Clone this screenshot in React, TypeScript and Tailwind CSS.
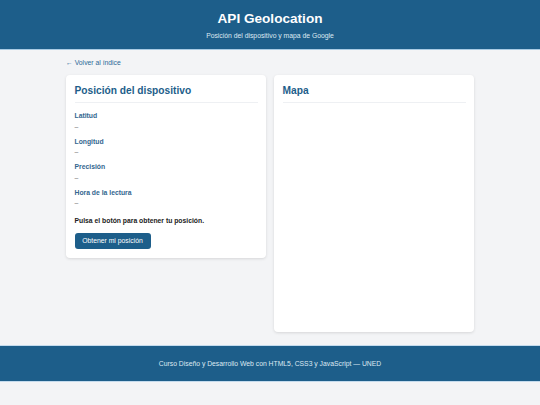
export default function App() {
  const fields = ["Latitud", "Longitud", "Precisión", "Hora de la lectura"]

  return (
    <div className="min-h-[405px] bg-[#f3f4f6] font-['Liberation_Sans',Arial,sans-serif] text-[6.8px] text-[#222]">
      <header className="h-[50px] border-b-[1.5px] border-[#a9cbe4] bg-[#1d5e8a] text-center text-white">
        <h1 className="pt-[11px] text-[13.6px] font-bold leading-[16px]">API Geolocation</h1>
        <p className="mt-[5px] text-[6.8px] leading-[8px] text-[#dde9f2]">
          Posición del dispositivo y mapa de Google
        </p>
      </header>

      <main className="mx-auto w-[408px] pt-[9px] pb-[13px]">
        <a href="#" className="block leading-[8px] text-[#2d6a96]">
          ← Volver al índice
        </a>

        <div className="mt-[8px] grid grid-cols-2 items-start gap-[8px]">
          <section className="rounded-[4px] bg-white p-[8.5px] shadow-[0_1px_3px_rgba(0,0,0,0.12)]">
            <h2 className="border-b border-[#eef0f3] pt-[1px] pb-[5px] text-[10.2px] font-bold leading-[12px] text-[#1d5e8a]">
              Posición del dispositivo
            </h2>
            <dl className="mt-[9.5px] flex flex-col gap-[7px]">
              {fields.map((f) => (
                <div key={f}>
                  <dt className="font-bold leading-[8px] text-[#33668f]">{f}</dt>
                  <dd className="mt-[2.5px] leading-[8px] text-[#777]">–</dd>
                </div>
              ))}
            </dl>
            <p className="mt-[10px] font-bold leading-[8px] text-[#222]">
              Pulsa el botón para obtener tu posición.
            </p>
            <button className="mt-[8px] h-[16px] w-[76px] rounded-[3px] bg-[#1d5e8a] text-[6.8px] leading-[16px] text-white">
              Obtener mi posición
            </button>
          </section>

          <section className="rounded-[4px] bg-white p-[8.5px] shadow-[0_1px_3px_rgba(0,0,0,0.12)]">
            <h2 className="border-b border-[#eef0f3] pt-[1px] pb-[5px] text-[10.2px] font-bold leading-[12px] text-[#1d5e8a]">
              Mapa
            </h2>
            <div className="mt-[8.5px] h-[212px]" />
          </section>
        </div>
      </main>

      <footer className="h-[37px] border-y border-[#c4dbed] bg-[#1d5e8a] text-center leading-[35px] text-[#dde9f2]">
        Curso Diseño y Desarrollo Web con HTML5, CSS3 y JavaScript — UNED
      </footer>
    </div>
  )
}
